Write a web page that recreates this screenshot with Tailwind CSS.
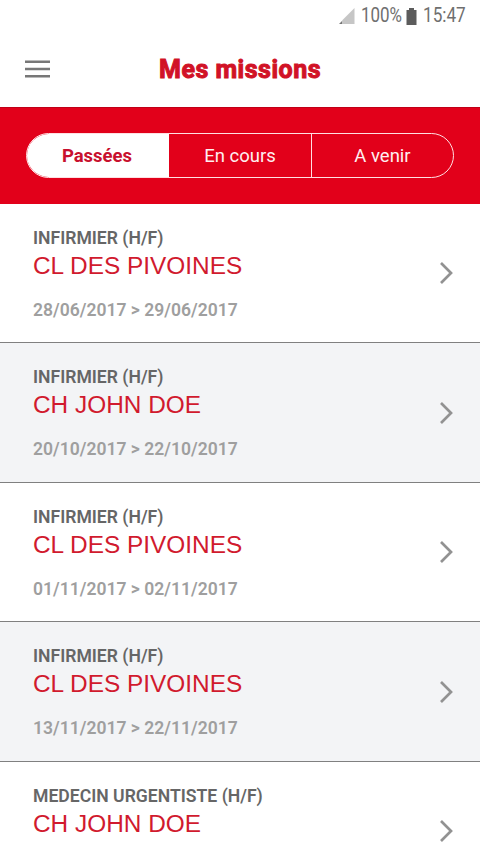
<!DOCTYPE html>
<html lang="fr">
  <head>
    <meta charset="UTF-8" />
    <meta name="viewport" content="width=device-width, initial-scale=1.0" />
    <title>Mes missions</title>
    <script src="https://cdn.jsdelivr.net/npm/@tailwindcss/browser@4"></script>
  </head>
  <body class="bg-white h-screen overflow-hidden flex flex-col font-[Roboto,sans-serif]">
    <!-- Barre d'état -->
    <div class="h-8 shrink-0 flex items-center justify-end pr-3.5 text-[19.5px] leading-8 text-[#6f6f6f]">
      <svg class="w-4 h-4 mr-[6px]" viewBox="0 0 16 16">
        <path d="M15.5 0V16H3V12.5Z" fill="#c6c6c6" />
        <path d="M3 13V16H0Z" fill="#777" />
      </svg>
      <span class="w-[41px] origin-left scale-x-[.87]">100%</span>
      <svg class="w-[11px] h-[17px] ml-1 mr-1.5" viewBox="0 0 11 17">
        <path d="M3 0h5v2H10.5v15H0.5V2H3z" fill="#5c5c5c" />
      </svg>
      <span class="w-[43px] origin-left scale-x-[.88]">15:47</span>
    </div>

    <header class="h-[74.6px] shrink-0 grid grid-cols-[25px_1fr_25px] items-center px-[25px]">
      <svg class="w-[25px] h-[18px]" viewBox="0 0 25 18" stroke="#777" stroke-width="2.4">
        <path d="M0 1.8H25M0 9H25M0 16.2H25" />
      </svg>
      <h1 class="text-center text-[25px] tracking-[0.5px] font-bold text-[#d11226] [-webkit-text-stroke:1px_#d11226] [stroke-linejoin:round]">Mes missions</h1>
    </header>

    <nav class="h-[97px] shrink-0 bg-[#e2001a] border-t border-[#c00018] px-[26px] pt-[25px]">
      <div class="h-[45px] grid grid-cols-[142px_1fr_141px] border-[1.5px] border-[#ffdfe2] rounded-full overflow-hidden text-[18.5px] text-[#ffeef0] text-center leading-[44px]">
        <button class="bg-white text-[#c8102e] font-bold -ml-0.5">Passées</button>
        <button class="border-r border-[#ffdfe2]">En cours</button>
        <button>A venir</button>
      </div>
    </nav>

    <ul id="missions" class="flex-1 min-h-0 overflow-hidden"></ul>

    <script>
      const missions = [
        ["INFIRMIER (H/F)", "CL DES PIVOINES", "28/06/2017 > 29/06/2017"],
        ["INFIRMIER (H/F)", "CH JOHN DOE", "20/10/2017 > 22/10/2017"],
        ["INFIRMIER (H/F)", "CL DES PIVOINES", "01/11/2017 > 02/11/2017"],
        ["INFIRMIER (H/F)", "CL DES PIVOINES", "13/11/2017 > 22/11/2017"],
        ["MEDECIN URGENTISTE (H/F)", "CH JOHN DOE", ""],
      ];

      document.getElementById("missions").innerHTML = missions
        .map(
          ([poste, lieu, dates]) => `
        <li class="h-[139.5px] flex items-center justify-between pl-[33px] pr-[26px] border-b border-[#808080] even:bg-[#f3f4f6]">
          <div class="h-full pt-[22.4px]">
            <p class="text-[17.6px] leading-6 font-semibold text-[#666]">${poste}</p>
            <p class="text-[24.4px] leading-[31px] text-[#d11a2e] font-['Liberation_Sans',sans-serif]">${lieu}</p>
            <p class="mt-[17px] text-[17.55px] leading-6 font-semibold text-[#9f9f9f]">${dates}</p>
          </div>
          <svg class="w-4 h-6 mt-px" viewBox="0 0 16 24" fill="none" stroke="#929292" stroke-width="2.7">
            <path d="M3 2L13 12L3 22" />
          </svg>
        </li>`
        )
        .join("");
    </script>
  </body>
</html>
